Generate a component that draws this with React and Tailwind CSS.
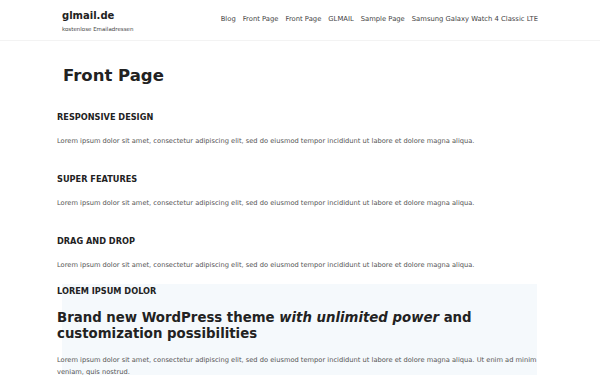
const NAV = ['Blog', 'Front Page', 'Front Page', 'GLMAIL', 'Sample Page', 'Samsung Galaxy Watch 4 Classic LTE'];

const LOREM = 'Lorem ipsum dolor sit amet, consectetur adipiscing elit, sed do eiusmod tempor incididunt ut labore et dolore magna aliqua.';

const FEATURES = ['Responsive Design', 'Super Features', 'Drag and Drop'];

export default function App() {
  return (
    <div className="min-h-screen bg-white text-[#222] font-['DejaVu_Sans',sans-serif]">
      {/* Header */}
      <header className="border-b border-[#f3f3f3]">
        <div className="w-[476px] ml-[62px] h-[40px] flex items-center justify-between">
          <div className="flex flex-col pt-[2px]">
            <span className="text-[10px] font-bold leading-[13px] text-[#222]">glmail.de</span>
            <span className="text-[5.5px] leading-[8px] mt-[3px] text-[#444]">kostenlose Emailadressen</span>
          </div>
          <nav className="flex gap-[7px] text-[6.8px] text-[#444] pb-[1px]">
            {NAV.map((n, i) => (
              <span key={i}>{n}</span>
            ))}
          </nav>
        </div>
      </header>

      <main className="ml-[57px] w-[480px]">
        <h1 className="ml-[6px] mt-[25px] text-[16.5px] font-bold leading-[20px] text-[#222]">Front Page</h1>

        {FEATURES.map((f, i) => (
          <section key={f} className={i === 0 ? 'mt-[25px]' : 'mt-[26px]'}>
            <h3 className="text-[8.2px] font-bold uppercase leading-[12px] text-[#222]">{f}</h3>
            <p className="mt-[12px] text-[6.7px] leading-[12px] text-[#555]">{LOREM}</p>
          </section>
        ))}

        <section className="mt-[13px] ml-[5px] bg-[#f5f9fc] pt-[1px]">
          <h4 className="-ml-[5px] text-[8.2px] font-bold uppercase leading-[12px] text-[#222]">Lorem ipsum dolor</h4>
          <h2 className="-ml-[5px] mt-[13px] text-[13.3px] font-bold leading-[16px] text-[#222]">
            Brand new WordPress theme <em className="italic">with unlimited power</em> and customization possibilities
          </h2>
          <p className="-ml-[5px] mt-[12px] text-[6.7px] leading-[12px] text-[#555]">
            {LOREM} Ut enim ad minim veniam, quis nostrud.
          </p>
        </section>
      </main>
    </div>
  );
}
